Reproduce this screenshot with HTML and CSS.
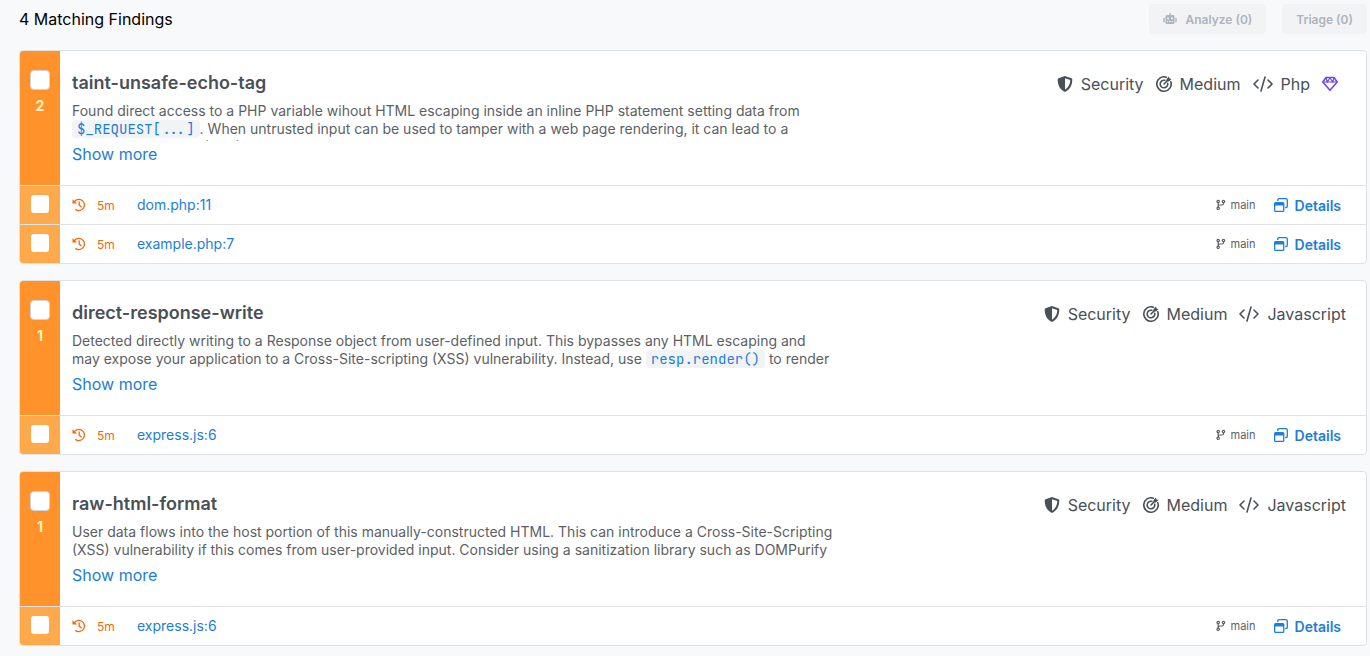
FILE: index.html
```html
<!DOCTYPE html>
<html lang="en">
<head>
<meta charset="utf-8">
<title>Findings</title>
<link rel="stylesheet" href="styles.css">
</head>
<body>
<svg class="sprite" aria-hidden="true">
  <symbol id="shield" viewBox="0 0 16 16"><path fill="currentColor" fill-rule="evenodd" d="M8 0l6.400 2.300c.6.2.9.6.9 1.200 0 5.600-2.200 10-7.300 12.500C2.900 13.500.7 9.100.7 3.500c0-.6.3-1 .9-1.200zM8 2.200v11.500c3.600-2.100 5.200-5.400 5.300-9.600z"/></symbol>
  <symbol id="target" viewBox="0 0 16 16"><g fill="none" stroke="currentColor" stroke-width="1.600" stroke-linecap="round"><path d="M10.300 1.200A7.200 7.200 0 1 0 14.800 5.700"/><path d="M8.800 4.300A3.800 3.800 0 1 0 11.700 7.200M8 8l4-4"/></g><path fill="currentColor" d="M10.500 3L13 .5l.5 2 2 .5L13 5.500l-2.500-.2z"/></symbol>
  <symbol id="code" viewBox="0 0 20 16"><path fill="none" stroke="currentColor" stroke-width="1.600" stroke-linecap="round" stroke-linejoin="round" d="M5 4L1 8l4 4M15 4l4 4-4 4M12 1L8 15"/></symbol>
  <symbol id="gem" viewBox="0 0 16 16"><path fill="none" stroke="currentColor" stroke-width="1.600" stroke-linejoin="round" d="M4 1.500h8l3.200 4.500L8 14.300.8 6z"/><path fill="none" stroke="currentColor" stroke-width="1.200" d="M.8 6h14.400M4 1.500L5.200 6 8 2l2.800 4L12 1.500"/></symbol>
  <symbol id="robot" viewBox="0 0 14 12"><path fill="currentColor" fill-rule="evenodd" d="M6.400 0h1.200v2H10q1.500 0 1.500 1.500v6Q11.500 11 10 11H4q-1.500 0-1.500-1.500v-6Q2.500 2 4 2h2.400zM4.200 4.500v1.700h1.700V4.500zm3.900 0v1.700h1.700V4.500zM4 8v1h1.300V8zm2.300 0v1h1.400V8zm2.400 0v1H10V8zM.3 5h1.400v4.200H.3zm12 0h1.400v4.200h-1.400z"/></symbol>
  <symbol id="history" viewBox="0 0 14 14"><path fill="none" stroke="currentColor" stroke-width="1.300" stroke-linecap="round" stroke-linejoin="round" d="M2 4.200A5.600 5.600 0 1 1 3.700 11.600M7.200 4v3.200l2 1.600"/><path fill="currentColor" d="M.5 1.200v4.400H5z"/></symbol>
  <symbol id="branch" viewBox="0 0 10 12"><g fill="none" stroke="currentColor" stroke-width="1.200"><circle cx="2.200" cy="2.500" r="1.200"/><circle cx="7.500" cy="2.500" r="1.200"/><circle cx="2.200" cy="9.300" r="1.200"/><path d="M2.200 3.700v4.400M7.500 3.700v.8q0 1.500-1.500 1.500H4Q2.200 6 2.200 7.500"/></g></symbol>
  <symbol id="windows" viewBox="0 0 14 14"><path fill="none" stroke="currentColor" stroke-width="1.300" d="M3.800 3V2q0-1.300 1.300-1.300H12q1.300 0 1.300 1.300v6.200q0 1.300-1.300 1.300h-.8"/><path fill="currentColor" fill-rule="evenodd" d="M1.600 4h7.200Q10.400 4 10.400 5.600v6.800Q10.400 14 8.800 14H1.600Q0 14 0 12.400V5.600Q0 4 1.600 4zM1.300 7.500v5.200h7.800V7.500z"/></symbol>
</svg>
<main class="page">
  <header class="toolbar">
    <h1 class="title">4 Matching Findings</h1>
    <div class="actions">
      <button class="action" disabled><svg class="icon-robot"><use href="#robot"/></svg>Analyze (0)</button>
      <button class="action" disabled>Triage (0)</button>
    </div>
  </header>

  <section class="card">
    <div class="rule">
      <div class="strip"><input class="check" type="checkbox" aria-label="Select taint-unsafe-echo-tag"><span class="count">2</span></div>
      <div class="info">
        <h2 class="name">taint-unsafe-echo-tag</h2>
        <p class="text">Found direct access to a PHP variable wihout HTML escaping inside an inline PHP statement setting data from <code class="code">$_REQUEST[...]</code>. When untrusted input can be used to tamper with a web page rendering, it can lead to a <span class="term">cross-site</span> scripting (XSS)</p>
        <a class="more" href="#">Show more</a>
      </div>
      <ul class="tags">
        <li class="tag"><svg class="icon"><use href="#shield"/></svg>Security</li>
        <li class="tag"><svg class="icon"><use href="#target"/></svg>Medium</li>
        <li class="tag"><svg class="icon-code"><use href="#code"/></svg>Php</li>
        <li class="tag tag-gem"><svg class="icon"><use href="#gem"/></svg></li>
      </ul>
    </div>
    <div class="row">
      <div class="row-strip"><input class="check check-row" type="checkbox" aria-label="Select dom.php:11"></div>
      <svg class="icon-small"><use href="#history"/></svg><span class="age">5m</span><a class="file" href="#">dom.php:11</a>
      <span class="branch"><svg class="icon-branch"><use href="#branch"/></svg>main</span>
      <button class="details"><svg class="icon-small"><use href="#windows"/></svg>Details</button>
    </div>
    <div class="row">
      <div class="row-strip"><input class="check check-row" type="checkbox" aria-label="Select example.php:7"></div>
      <svg class="icon-small"><use href="#history"/></svg><span class="age">5m</span><a class="file" href="#">example.php:7</a>
      <span class="branch"><svg class="icon-branch"><use href="#branch"/></svg>main</span>
      <button class="details"><svg class="icon-small"><use href="#windows"/></svg>Details</button>
    </div>
  </section>

  <section class="card">
    <div class="rule">
      <div class="strip"><input class="check" type="checkbox" aria-label="Select direct-response-write"><span class="count">1</span></div>
      <div class="info">
        <h2 class="name">direct-response-write</h2>
        <p class="text">Detected directly writing to a Response object from user-defined input. This bypasses any HTML escaping and may expose your application to a Cross-Site-scripting (XSS) vulnerability. Instead, use <code class="code">resp.render()</code> to render</p>
        <a class="more" href="#">Show more</a>
      </div>
      <ul class="tags">
        <li class="tag"><svg class="icon"><use href="#shield"/></svg>Security</li>
        <li class="tag"><svg class="icon"><use href="#target"/></svg>Medium</li>
        <li class="tag"><svg class="icon-code"><use href="#code"/></svg>Javascript</li>
      </ul>
    </div>
    <div class="row">
      <div class="row-strip"><input class="check check-row" type="checkbox" aria-label="Select express.js:6"></div>
      <svg class="icon-small"><use href="#history"/></svg><span class="age">5m</span><a class="file" href="#">express.js:6</a>
      <span class="branch"><svg class="icon-branch"><use href="#branch"/></svg>main</span>
      <button class="details"><svg class="icon-small"><use href="#windows"/></svg>Details</button>
    </div>
  </section>

  <section class="card">
    <div class="rule">
      <div class="strip"><input class="check" type="checkbox" aria-label="Select raw-html-format"><span class="count">1</span></div>
      <div class="info">
        <h2 class="name">raw-html-format</h2>
        <p class="text">User data flows into the host portion of this manually-constructed HTML. This can introduce a Cross-Site-Scripting (XSS) vulnerability if this comes from user-provided input. Consider using a sanitization library such as DOMPurify</p>
        <a class="more" href="#">Show more</a>
      </div>
      <ul class="tags">
        <li class="tag"><svg class="icon"><use href="#shield"/></svg>Security</li>
        <li class="tag"><svg class="icon"><use href="#target"/></svg>Medium</li>
        <li class="tag"><svg class="icon-code"><use href="#code"/></svg>Javascript</li>
      </ul>
    </div>
    <div class="row">
      <div class="row-strip"><input class="check check-row" type="checkbox" aria-label="Select express.js:6"></div>
      <svg class="icon-small"><use href="#history"/></svg><span class="age">5m</span><a class="file" href="#">express.js:6</a>
      <span class="branch"><svg class="icon-branch"><use href="#branch"/></svg>main</span>
      <button class="details"><svg class="icon-small"><use href="#windows"/></svg>Details</button>
    </div>
  </section>
</main>
</body>
</html>
```
FILE: styles.css
```css
* { box-sizing: border-box; }
body {
  margin: 0;
  background: #f8f9fb;
  color: #495057;
  font-family: Inter, "Liberation Sans", sans-serif;
  font-size: 16px;
}
h1, h2, p, ul { margin: 0; padding: 0; }
button { font-family: inherit; border: 0; }
a { color: #1c7ed6; text-decoration: none; }
svg { flex: none; }
.sprite { display: none; }
.page { padding: 4px 3px 10px 19px; }
.toolbar {
  display: flex;
  justify-content: space-between;
  align-items: center;
  margin-bottom: 16px;
}
.title { font-size: 16px; font-weight: 400; color: #000; }
.actions { display: flex; gap: 16px; }
.action {
  display: flex;
  align-items: center;
  height: 30px;
  padding: 0 14px;
  border-radius: 4px;
  background: #f1f3f5;
  color: #adb5bd;
  font-size: 12px;
  font-weight: 600;
}
.card {
  margin-bottom: 16px;
  border: 1px solid #dee2e6;
  border-radius: 4px;
  background: #fff;
  overflow: hidden;
}
.rule { display: flex; min-height: 134px; }
.strip {
  display: flex;
  flex: none;
  flex-direction: column;
  align-items: center;
  width: 40px;
  padding-top: 19px;
  background: #ff922b;
}
.check {
  appearance: none;
  width: 20px;
  height: 20px;
  margin: 0;
  border: 1px solid #ced4da;
  border-radius: 4px;
  background: #fff;
}
.check-row { width: 18px; height: 18px; border: 0; border-radius: 3px; }
.count {
  margin-top: 6px;
  color: #fff3bf;
  font-size: 14px;
  font-weight: 700;
  line-height: 20px;
}
.info { flex: 0 1 776px; padding: 20px 0 0 12px; }
.name { font-size: 18px; font-weight: 600; line-height: 24px; }
.text {
  height: 39px;
  margin-top: 7px;
  overflow: hidden;
  color: #5c5f66;
  font-size: 14px;
  line-height: 18px;
}
.term { white-space: nowrap; }
.code {
  padding: 0 5px;
  border-radius: 4px;
  background: #f1f3f5;
  color: #1c7ed6;
  font-family: "JetBrains Mono", "Roboto Mono", "Liberation Mono", monospace;
  font-size: 14px;
  line-height: 16px;
}
.more { display: inline-block; margin-top: 1px; line-height: 24px; }
.tags {
  display: flex;
  align-items: center;
  gap: 12px;
  height: 24px;
  margin: 21px 20px 0 auto;
  list-style: none;
}
.tag { display: flex; align-items: center; gap: 8px; }
.tag-gem { margin-right: 8px; color: #7048e8; }
.icon { width: 16px; height: 16px; }
.icon-code { width: 20px; height: 16px; }
.icon-robot { width: 14px; height: 12px; margin-right: 9px; }
.icon-small { width: 14px; height: 14px; }
.icon-branch { width: 10px; height: 12px; }
.row {
  display: flex;
  align-items: center;
  height: 39px;
  padding-right: 25px;
  border-top: 1px solid #dee2e6;
  color: #f76707;
}
.row-strip {
  display: flex;
  justify-content: center;
  align-items: center;
  width: 40px;
  height: 38px;
  margin-right: 12px;
  padding-bottom: 2px;
  background: #ffa94d;
}
.age { width: 40px; margin-left: 11px; font-size: 12px; }
.file { padding-bottom: 2px; font-size: 14px; }
.branch {
  display: flex;
  align-items: center;
  gap: 5px;
  margin-left: auto;
  color: #5c5f66;
  font-size: 11px;
}
.details {
  display: flex;
  align-items: center;
  gap: 7px;
  margin-left: 18px;
  padding: 0;
  background: transparent;
  color: #1c7ed6;
  font-size: 14px;
  font-weight: 600;
}
```
